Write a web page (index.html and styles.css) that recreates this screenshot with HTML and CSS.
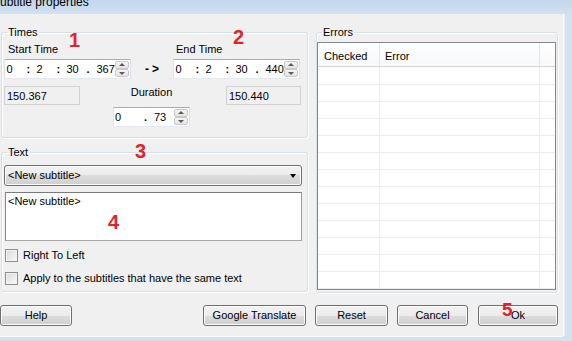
FILE: index.html
```html
<!DOCTYPE html>
<html>
<head>
<meta charset="utf-8">
<title>Subtitle properties</title>
<link rel="stylesheet" href="styles.css">
</head>
<body>
<div class="window">
  <div class="titlebar"><span class="title">ubtitle properties</span></div>
  <div class="client">
    <div class="main">
      <div class="left">
        <fieldset class="group times">
          <legend>Times</legend>
          <div class="time-row">
            <div class="time-col">
              <div class="lbl">Start Time</div>
              <div class="updown time">
                <div class="segs"><span>0</span><span class="sep">:</span><span>2</span><span class="sep">:</span><span>30</span><span class="sep">.</span><span>367</span></div>
                <div class="spin"><span class="up"></span><span class="dn"></span></div>
              </div>
            </div>
            <div class="arrow">-&gt;</div>
            <div class="time-col end">
              <div class="lbl">End Time</div>
              <div class="updown time">
                <div class="segs"><span>0</span><span class="sep">:</span><span>2</span><span class="sep">:</span><span>30</span><span class="sep">.</span><span>440</span></div>
                <div class="spin"><span class="up"></span><span class="dn"></span></div>
              </div>
            </div>
          </div>
          <div class="sec-row">
            <div class="ro">150.367</div>
            <div class="dur">
              <div class="lbl">Duration</div>
              <div class="updown duration">
                <div class="segs"><span>0</span><span class="sep">.</span><span>73</span></div>
                <div class="spin"><span class="up"></span><span class="dn"></span></div>
              </div>
            </div>
            <div class="ro">150.440</div>
          </div>
        </fieldset>
        <fieldset class="group text">
          <legend>Text</legend>
          <div class="combo"><span>&lt;New subtitle&gt;</span><span class="caret"></span></div>
          <div class="memo">&lt;New subtitle&gt;</div>
          <label class="chk first"><span class="box"></span>Right To Left</label>
          <label class="chk"><span class="box"></span>Apply to the subtitles that have the same text</label>
        </fieldset>
      </div>
      <fieldset class="group errors">
        <legend>Errors</legend>
        <div class="list">
          <div class="lv-head"><span class="c1">Checked</span><span class="c2">Error</span><span class="c3"></span></div>
          <div class="lv-body"></div>
        </div>
      </fieldset>
    </div>
    <div class="buttons">
      <button class="btn help">Help</button>
      <button class="btn gt">Google Translate</button>
      <button class="btn reset">Reset</button>
      <button class="btn cancel">Cancel</button>
      <button class="btn ok">Ok</button>
    </div>
  </div>
  <span class="mark m1">1</span>
  <span class="mark m2">2</span>
  <span class="mark m3">3</span>
  <span class="mark m4">4</span>
  <span class="mark m5">5</span>
</div>
</body>
</html>
```

FILE: styles.css
```css
* { box-sizing: border-box; }

html, body {
  margin: 0;
  padding: 0;
}

body {
  width: 572px;
  height: 341px;
  overflow: hidden;
  background: #d3e2f1;
  font-family: "Liberation Sans", Arial, sans-serif;
  font-size: 11px;
  color: #000;
}

.window {
  position: relative;
  width: 572px;
  height: 341px;
  display: flex;
  flex-direction: column;
}

.titlebar {
  height: 14px;
  overflow: hidden;
  background: linear-gradient(#c4d6eb, #d2e1f1);
}

.title {
  display: block;
  font-size: 12px;
  line-height: 12px;
  margin-top: -4px;
  white-space: nowrap;
}

.client {
  width: 563px;
  height: 322px;
  background: #f0f0f0;
  box-shadow: 1px 0 0 #f9fbfd, 2px 0 0 #e6eef7, 0 1px 0 #f9fbfd;
}

.main {
  display: flex;
  align-items: flex-start;
  padding: 12px 0 0 1px;
}

.left {
  width: 307px;
  flex: none;
  display: flex;
  flex-direction: column;
}

fieldset.group {
  margin: 0;
  min-width: 0;
  border: 1px solid #d5dfe5;
  border-radius: 3px;
  box-shadow: inset 1px 1px 0 #fff, 1px 1px 0 #fff;
}

fieldset.group legend {
  padding: 0 1px;
  margin-left: 3px;
  line-height: 13px;
  font-size: 11px;
}

/* Times */
fieldset.group.times {
  padding: 4px 5px 10px 2px;
}

.time-row {
  display: flex;
}

.time-col {
  width: 127px;
}

.lbl {
  line-height: 13px;
  padding-left: 4px;
}

.end .lbl {
  padding-left: 3px;
}

.updown {
  margin-top: 3px;
  height: 20px;
  border: 1px solid #abadb3;
  border-color: #abadb3 #dbdfe6 #e3e9ef #e2e3ea;
  background: #fff;
  display: flex;
}

.updown.time {
  width: 127px;
}

.segs {
  flex: 1;
  display: grid;
  grid-template-columns: 20px 10px 20px 10px 20px 10px auto;
  padding-left: 1.5px;
  line-height: 18px;
  white-space: nowrap;
}

.sep {
  font-weight: bold;
}

.spin {
  width: 15px;
  display: flex;
  flex-direction: column;
  padding: 1px 1px 1px 0;
}

.spin span {
  flex: 1;
  position: relative;
  border: 1px solid #c9c9c9;
  border-radius: 2px;
  background: linear-gradient(#f5f5f5, #e4e4e4);
}

.spin span::after {
  content: "";
  position: absolute;
  left: 50%;
  top: 50%;
  margin: -2px 0 0 -3px;
  border-left: 3px solid transparent;
  border-right: 3px solid transparent;
}

.spin .up::after {
  border-bottom: 3px solid #5a5a5a;
}

.spin .dn::after {
  border-top: 3px solid #5a5a5a;
  margin-top: -1px;
}

.arrow {
  width: 42px;
  align-self: flex-end;
  height: 20px;
  line-height: 20px;
  text-align: center;
  font-weight: bold;
  font-size: 12px;
  letter-spacing: 3px;
  padding-left: 3px;
}

.sec-row {
  display: flex;
  align-items: flex-start;
  margin-top: 7px;
}

.ro {
  height: 19px;
  border: 1px solid #d2d2d2;
  background: #f0f0f0;
  padding: 2px 0 0 2px;
  line-height: 15px;
}

.ro:first-child {
  width: 76px;
}

.ro:last-child {
  width: 75px;
}

.dur {
  width: 146px;
  padding-right: 3px;
  display: flex;
  flex-direction: column;
  align-items: center;
}

.dur .lbl {
  padding-left: 0;
}

.updown.duration {
  width: 77px;
  margin-top: 8px;
}

.duration .segs {
  grid-template-columns: 29px 10px auto;
  padding-left: 1px;
}

/* Text group */
fieldset.group.text {
  margin-top: 8px;
  padding: 6px 5px 6px 2px;
}

.combo {
  width: 298px;
  height: 21px;
  border: 1px solid #707070;
  border-radius: 3px;
  background: linear-gradient(#f2f2f2 0%, #ebebeb 50%, #dddddd 50%, #cfcfcf 100%);
  box-shadow: inset 0 0 0 1px #fbfbfb;
  display: flex;
  align-items: center;
  justify-content: space-between;
  padding: 0 5px 0 3px;
  line-height: 13px;
}

.caret {
  width: 0;
  height: 0;
  border-left: 3.5px solid transparent;
  border-right: 3.5px solid transparent;
  border-top: 4px solid #000;
}

.memo {
  width: 297px;
  height: 49px;
  margin: 6px 0 0 1px;
  border: 1px solid #8a8a8a;
  border-color: #7a7a7a #9a9a9a #a8a8a8 #8a8a8a;
  background: #fff;
  padding: 2px 0 0 2px;
  line-height: 13px;
}

.chk {
  display: flex;
  align-items: center;
  height: 13px;
  line-height: 13px;
  margin: 10px 0 0 1px;
}

.chk.first {
  margin-top: 8px;
}

.box {
  width: 13px;
  height: 13px;
  margin-right: 5px;
  border: 1px solid #8e8f8f;
  background: linear-gradient(135deg, #d8d8d8, #fbfbfb);
  box-shadow: inset 0 0 0 1px #f2f2f2;
}

/* Errors group */
fieldset.group.errors {
  margin-left: 8px;
  width: 242px;
  flex: none;
  padding: 3px 1px 2px 0;
}

fieldset.group.errors legend {
  margin-left: 5px;
}

.list {
  width: 239px;
  height: 248px;
  border: 1px solid #828790;
  background: #fff;
  display: flex;
  flex-direction: column;
}

.lv-head {
  height: 24px;
  display: flex;
  border-bottom: 1px solid #d5d5d5;
  background: linear-gradient(#fff, #f7f8fa);
  line-height: 13px;
}

.lv-head span {
  padding: 7px 0 0 0;
  border-right: 1px solid #e5e5e5;
}

.lv-head .c1 {
  width: 62px;
  padding-left: 6px;
}

.lv-head .c2 {
  width: 160px;
  padding-left: 5px;
}

.lv-head .c3 {
  flex: 1;
  border-right: 0;
}

.lv-body {
  flex: 1;
  background:
    linear-gradient(to right, transparent 61px, #ececec 61px, #ececec 62px, transparent 62px, transparent 221px, #ececec 221px, #ececec 222px, transparent 222px),
    repeating-linear-gradient(to bottom, transparent 0, transparent 16px, #ececec 16px, #ececec 17px);
  background-position: 0 0, 0 1px;
}

/* Buttons */
.buttons {
  display: flex;
  margin-top: 12px;
}

.btn {
  height: 21px;
  padding: 0;
  font-family: "Liberation Sans", Arial, sans-serif;
  font-size: 11px;
  line-height: 13px;
  color: #000;
  border: 1px solid #707070;
  border-radius: 3px;
  background: linear-gradient(#f2f2f2 0%, #ebebeb 50%, #dddddd 50%, #cfcfcf 100%);
  box-shadow: inset 0 0 0 1px #fcfcfc;
}

.help { width: 72px; }
.gt { width: 103px; margin-left: 131px; }
.reset { width: 73px; margin-left: 9px; }
.cancel { width: 71px; margin-left: 9px; }
.ok { width: 80px; margin-left: 10px; }

/* Red annotation numbers */
.mark {
  position: absolute;
  font-family: "Liberation Sans", Arial, sans-serif;
  font-weight: bold;
  font-size: 20px;
  line-height: 20px;
  color: #e2232a;
}

.m1 { left: 69px; top: 30px; }
.m2 { left: 233px; top: 27px; }
.m3 { left: 135px; top: 141px; }
.m4 { left: 108px; top: 212px; }
.m5 { left: 502px; top: 300px; font-size: 19px; }
```
